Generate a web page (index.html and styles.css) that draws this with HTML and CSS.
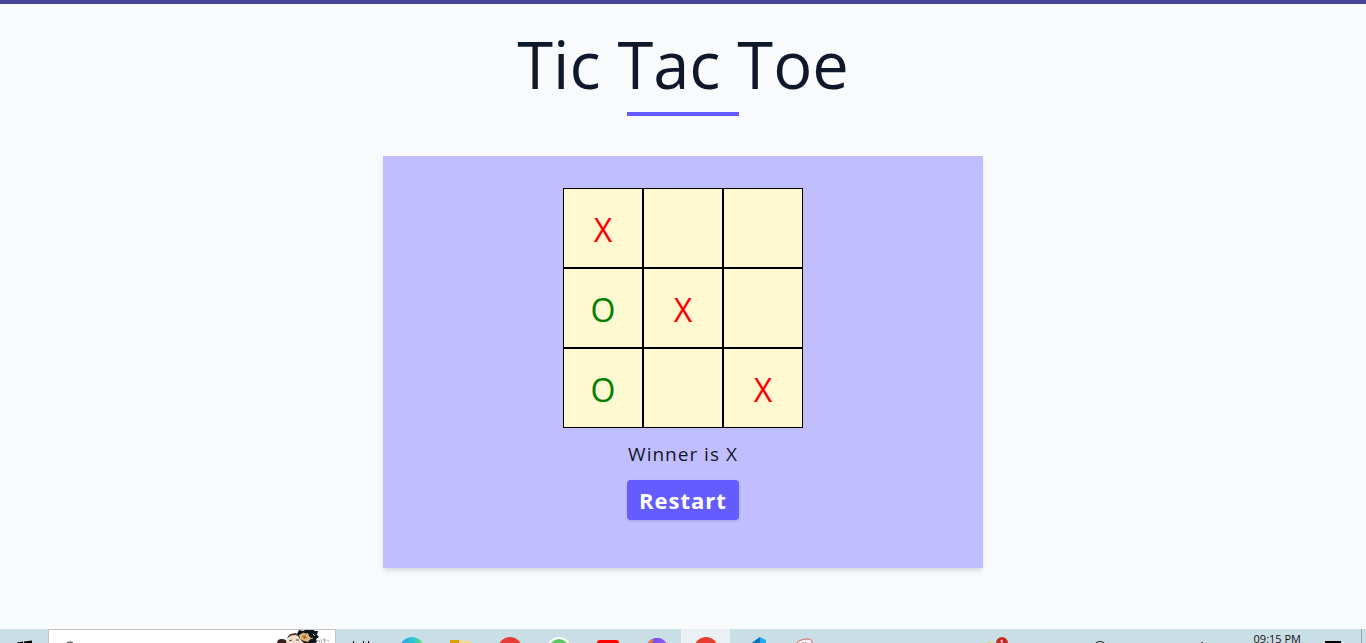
FILE: index.html
```html
<!DOCTYPE html>
<html lang="en">
<head>
<meta charset="utf-8">
<meta name="viewport" content="width=device-width, initial-scale=1">
<title>Tic Tac Toe</title>
<link rel="stylesheet" href="styles.css">
</head>
<body>
<main class="page">
  <h1 class="title">Tic Tac Toe</h1>
  <div class="underline"></div>
  <section class="card">
    <div class="board">
      <button class="cell cell-x">X</button>
      <button class="cell" aria-label="Empty"></button>
      <button class="cell" aria-label="Empty"></button>
      <button class="cell cell-o">O</button>
      <button class="cell cell-x">X</button>
      <button class="cell" aria-label="Empty"></button>
      <button class="cell cell-o">O</button>
      <button class="cell" aria-label="Empty"></button>
      <button class="cell cell-x">X</button>
    </div>
    <p class="status">Winner is X</p>
    <button class="restart">Restart</button>
  </section>
</main>
<footer class="taskbar">
  <button class="task task-start" aria-label="Start"><svg width="24" height="24" viewBox="0 0 24 24"><path d="M5 5.500 11 4.600V12H5zM12 4.400 20 3.500V12h-8zM5 13h6v7l-6-1zM12 13h8v8l-8-1z" fill="#000"/></svg></button>
  <div class="search">
    <svg width="16" height="24" viewBox="0 0 16 24" fill="none" stroke="#222"><circle cx="7" cy="9" r="5"/><path d="m4 13-4 5"/></svg>
    <input class="search-input" type="text" aria-label="Search">
    <svg class="portrait" width="60" height="40" viewBox="0 0 60 40">
      <path d="M2 13q0-4 5-4 4 0 5 3l-1 8H2z" fill="#35211c"/>
      <path d="M11 20q-1-12 5-15 7-3 12 2l2 15H13z" fill="#f3dfcf"/>
      <path d="M12 9q1-6 9-6l3 3-4-1q-5 0-8 4z" fill="#563228"/>
      <path d="m24 0 4 1 2-1 7-1 3 2 3 0-1 4 2 2-3 2 1 3-4 2-4 5-6-1 1-5-4-4-3-5z" fill="#10141f"/>
      <path d="m24 5 4-2 2 1 3-1 1 3 2 2-3 4-4-1-4-2z" fill="#dfb878"/>
      <path d="m27 6 3-1 2 3-3 1z" fill="#a76d40"/>
      <path d="m28 3 3 1m4 5 3-1M38 4l2 2" stroke="#c8b67a"/>
      <path d="m14 11 3-1m4 0 3 0" stroke="#6b4336"/>
      <path d="m42 11 2-1 1 3m1-4 1 4m1-3 3 0m-2-2 1 5m2-3 2 1" fill="none" stroke="#aaa"/>
    </svg>
  </div>
  <button class="task task-view" aria-label="Task view"><svg width="24" height="24" viewBox="0 0 24 24" fill="none" stroke="#000"><path d="M3.500 4v10m10-10v10M18.500 4v10"/></svg></button>
  <button class="task" aria-label="Edge"><svg width="24" height="24" viewBox="0 0 24 24"><defs><linearGradient id="edge"><stop stop-color="#249bdc"/><stop offset=".5" stop-color="#2dc4df"/><stop offset="1" stop-color="#65dc63"/></linearGradient></defs><circle cx="12" cy="12" r="12" fill="url(#edge)"/><path d="M3 7q4-4 10-2 5 2 5 7H3" fill="#2abad8"/></svg></button>
  <button class="task" aria-label="Files"><svg width="24" height="24" viewBox="0 0 24 24"><path d="M1 3h9l2 2v7H1z" fill="#e1a100"/><path d="M10 4h12v16H1V6h9z" fill="#ffda76"/><path d="M1 3h9v3H1z" fill="#dda000"/></svg></button>
  <button class="task" aria-label="Browser"><svg width="24" height="24" viewBox="0 0 24 24"><circle cx="12" cy="12" r="12" fill="#e63d32"/><circle cx="12" cy="12" r="5" fill="#fff"/></svg></button>
  <button class="task" aria-label="Messages"><svg width="24" height="24" viewBox="0 0 24 24"><circle cx="12" cy="12" r="12" fill="#fff"/><circle cx="12" cy="12" r="10" fill="#5bc866"/></svg></button>
  <button class="task" aria-label="Video"><svg width="24" height="24" viewBox="0 0 24 24"><rect y="3" x="1" width="22" height="17" rx="3" fill="#f00"/><path d="m9 8 7 4-7 4z" fill="#fff"/></svg></button>
  <button class="task" aria-label="Firefox"><svg width="24" height="24" viewBox="0 0 24 24"><defs><linearGradient id="fox"><stop stop-color="#7542e5"/><stop offset="1" stop-color="#9061ff"/></linearGradient></defs><circle cx="12" cy="12" r="11" fill="#7b48ea"/><path d="M5 10Q6 1 12 1q9 1 10 9v7H6z" fill="url(#fox)"/><path d="M5 4q2-2 4-2L7 6l-1 6H1q0-5 4-8" fill="#f27b27"/></svg></button>
  <button class="task task-active" aria-label="Browser window"><svg width="24" height="24" viewBox="0 0 24 24"><circle cx="12" cy="12" r="12" fill="#e63d32"/><circle cx="12" cy="12" r="5" fill="#fff"/></svg></button>
  <button class="task" aria-label="Code editor"><svg width="24" height="24" viewBox="0 0 24 24"><path d="m17 0 6 3v18l-6 3L5 9z" fill="#28a9ef"/><path d="m17 0 0 8L5 19l-3-3 8-11z" fill="#0876bd"/></svg></button>
  <button class="task" aria-label="Snipping tool"><svg width="24" height="24" viewBox="0 0 24 24"><path d="M3 8Q7 2 15 2q6 0 5 4l-3 8H3z" fill="#f7f5f5" stroke="#df5b60"/><path d="m9 7 2-2 1 2 2-2 1 3" fill="none" stroke="#aaa"/></svg></button>
  <div class="tray">
    <button class="tray-button" aria-label="Weather, 1 notification"><svg width="24" height="24" viewBox="0 0 24 24"><circle cx="6" cy="12" r="7" fill="#f4d54f"/><circle cx="18" cy="6" r="6" fill="#c52b20"/><path d="m16.500 4 1.500-1v6" fill="none" stroke="#fff"/></svg></button>
    <button class="tray-button" aria-label="Camera"><svg width="24" height="24" viewBox="0 0 24 24" fill="none" stroke="#222"><path d="M7 7q1-2.500 5-2.500T17 7v9H7z"/></svg></button>
    <button class="tray-button" aria-label="Network"><svg width="24" height="24" viewBox="0 0 24 24" fill="none" stroke="#555"><path d="m10 7 2-2 2 2"/></svg></button>
    <time class="clock">09:15 PM</time>
    <button class="notes" aria-label="Notifications"><svg width="16" height="24" viewBox="0 0 16 24"><path d="M0 4h16v13H8l-4 4v-4H0z"/></svg></button>
    <button class="desktop" aria-label="Show desktop"></button>
  </div>
</footer>
</body>
</html>
```
FILE: styles.css
```css
*, *::before, *::after { box-sizing: border-box; }
body {
  display: flex;
  flex-direction: column;
  min-height: 100vh;
  margin: 0;
  border-top: 4px solid #484699;
  background: #f8fafc;
  color: #0f172a;
  font-family: "Segoe UI", "Open Sans", "Noto Sans", sans-serif;
}
button { padding: 0; border: 0; font: inherit; background: none; cursor: pointer; }
svg { display: block; }
.page {
  flex: 1;
  display: flex;
  flex-direction: column;
  align-items: center;
  padding: 20px 16px 60px;
}
.title {
  margin: 0 0 8px;
  font-size: 65px;
  font-weight: 400;
  line-height: 80px;
}
.underline { width: 112px; height: 4px; background: #645cff; }
.card {
  display: flex;
  flex-direction: column;
  align-items: center;
  width: 100%;
  max-width: 600px;
  margin-top: 40px;
  padding: 32px 32px 48px;
  background: #c1beff;
  box-shadow: 0 4px 6px -1px rgba(0, 0, 0, .1), 0 2px 4px -1px rgba(0, 0, 0, .06);
}
.board { display: grid; grid-template-columns: repeat(3, 80px); grid-auto-rows: 80px; }
.cell {
  padding-top: 3px;
  border: 1px solid #000;
  background: #fff8d1;
  font-size: 32px;
  line-height: 40px;
}
.cell-x { color: #f00; }
.cell-o { color: #008000; }
.status { margin: 12px 0; font-size: 19px; line-height: 28px; letter-spacing: 1px; }
.restart {
  min-width: 112px;
  height: 40px;
  padding: 0 12px;
  border-radius: 4px;
  background: #645cff;
  box-shadow: 0 1px 3px rgba(0, 0, 0, .15);
  color: #fff;
  font-size: 22px;
  font-weight: 700;
  line-height: 40px;
  letter-spacing: 1px;
}
.taskbar {
  display: flex;
  align-items: flex-start;
  height: 14px;
  overflow: hidden;
  background: #cadfe5;
}
.task {
  display: flex;
  flex: none;
  justify-content: center;
  width: 49px;
  height: 40px;
  padding-top: 8px;
}
.task-start { width: 48px; }
.task-view { width: 51px; }
.task-active { background: #e9f1f3; }
.search {
  display: flex;
  flex: none;
  width: 288px;
  height: 40px;
  padding-left: 14px;
  border: 1px solid #c4c4c4;
  background: #fff;
}
.search > svg:first-child { margin-top: 8px; }
.search-input { flex: 1; min-width: 0; border: 0; outline: 0; background: none; }
.tray { display: flex; margin-left: auto; height: 40px; gap: 28px; }
.tray-button { display: flex; width: 24px; padding-top: 8px; }
.tray-button:first-child { margin-right: 52px; }
.tray-button:nth-child(2) { margin-right: 50px; }
.clock { margin-left: 12px; color: #111; font-size: 11px; line-height: 20px; }
.notes { display: flex; width: 16px; margin: 0 -8px 0 -4px; padding-top: 8px; }
.desktop { width: 5px; border-left: 1px solid #92a8b0; }
```
